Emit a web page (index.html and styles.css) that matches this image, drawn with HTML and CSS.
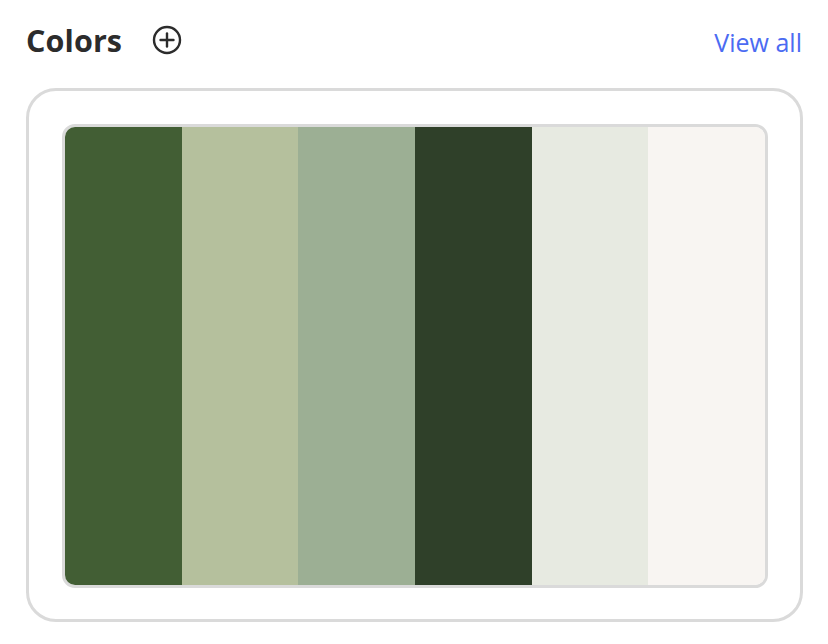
FILE: index.html
```html
<!DOCTYPE html>
<html lang="en">
<head>
<meta charset="utf-8">
<title>Colors</title>
<link rel="stylesheet" href="styles.css">
</head>
<body>
<div class="panel">
  <div class="header">
    <div class="title-group">
      <h2 class="title">Colors</h2>
      <button class="add-btn" aria-label="Add color">
        <svg width="30" height="30" viewBox="0 0 30 30" fill="none" stroke="#2c2c2c" stroke-width="2.4" stroke-linecap="round">
          <circle cx="15" cy="15" r="13"/>
          <line x1="15" y1="8.5" x2="15" y2="21.5"/>
          <line x1="8.5" y1="15" x2="21.5" y2="15"/>
        </svg>
      </button>
    </div>
    <a class="view-all" href="#">View all</a>
  </div>
  <div class="card">
    <div class="palette">
      <div class="swatch s1"></div>
      <div class="swatch s2"></div>
      <div class="swatch s3"></div>
      <div class="swatch s4"></div>
      <div class="swatch s5"></div>
      <div class="swatch s6"></div>
    </div>
  </div>
</div>
</body>
</html>
```

FILE: styles.css
```css
html, body {
  margin: 0;
  padding: 0;
  background: #ffffff;
}
body {
  font-family: "Open Sans", "Liberation Sans", sans-serif;
}
.panel {
  width: 828px;
  height: 644px;
  box-sizing: border-box;
  padding: 0 25px 0 26px;
}
.header {
  height: 88px;
  display: flex;
  align-items: center;
  justify-content: space-between;
  padding-bottom: 4px;
  box-sizing: border-box;
}
.title-group {
  display: flex;
  align-items: center;
  gap: 30px;
  margin-top: -4px;
}
.title {
  margin: 0;
  font-size: 30.5px;
  font-weight: 700;
  color: #2c2c2c;
  letter-spacing: 0.1px;
}
.add-btn {
  background: none;
  border: none;
  padding: 0;
  width: 30px;
  height: 30px;
  display: flex;
  cursor: pointer;
}
.view-all {
  font-size: 25px;
  color: #4b6bf2;
  text-decoration: none;
  margin-right: 1px;
}
.card {
  height: 534px;
  box-sizing: border-box;
  border: 3px solid #dadada;
  border-radius: 30px;
  padding: 33px 32px 31px 33px;
}
.palette {
  height: 100%;
  box-sizing: border-box;
  border: 3px solid #dadada;
  border-radius: 13px;
  overflow: hidden;
  display: flex;
}
.swatch {
  flex: 1;
}
.s1 { background: #425e34; }
.s2 { background: #b5c09d; }
.s3 { background: #9caf94; }
.s4 { background: #2f4029; }
.s5 { background: #e7eae1; }
.s6 { background: #f8f5f2; }
```
